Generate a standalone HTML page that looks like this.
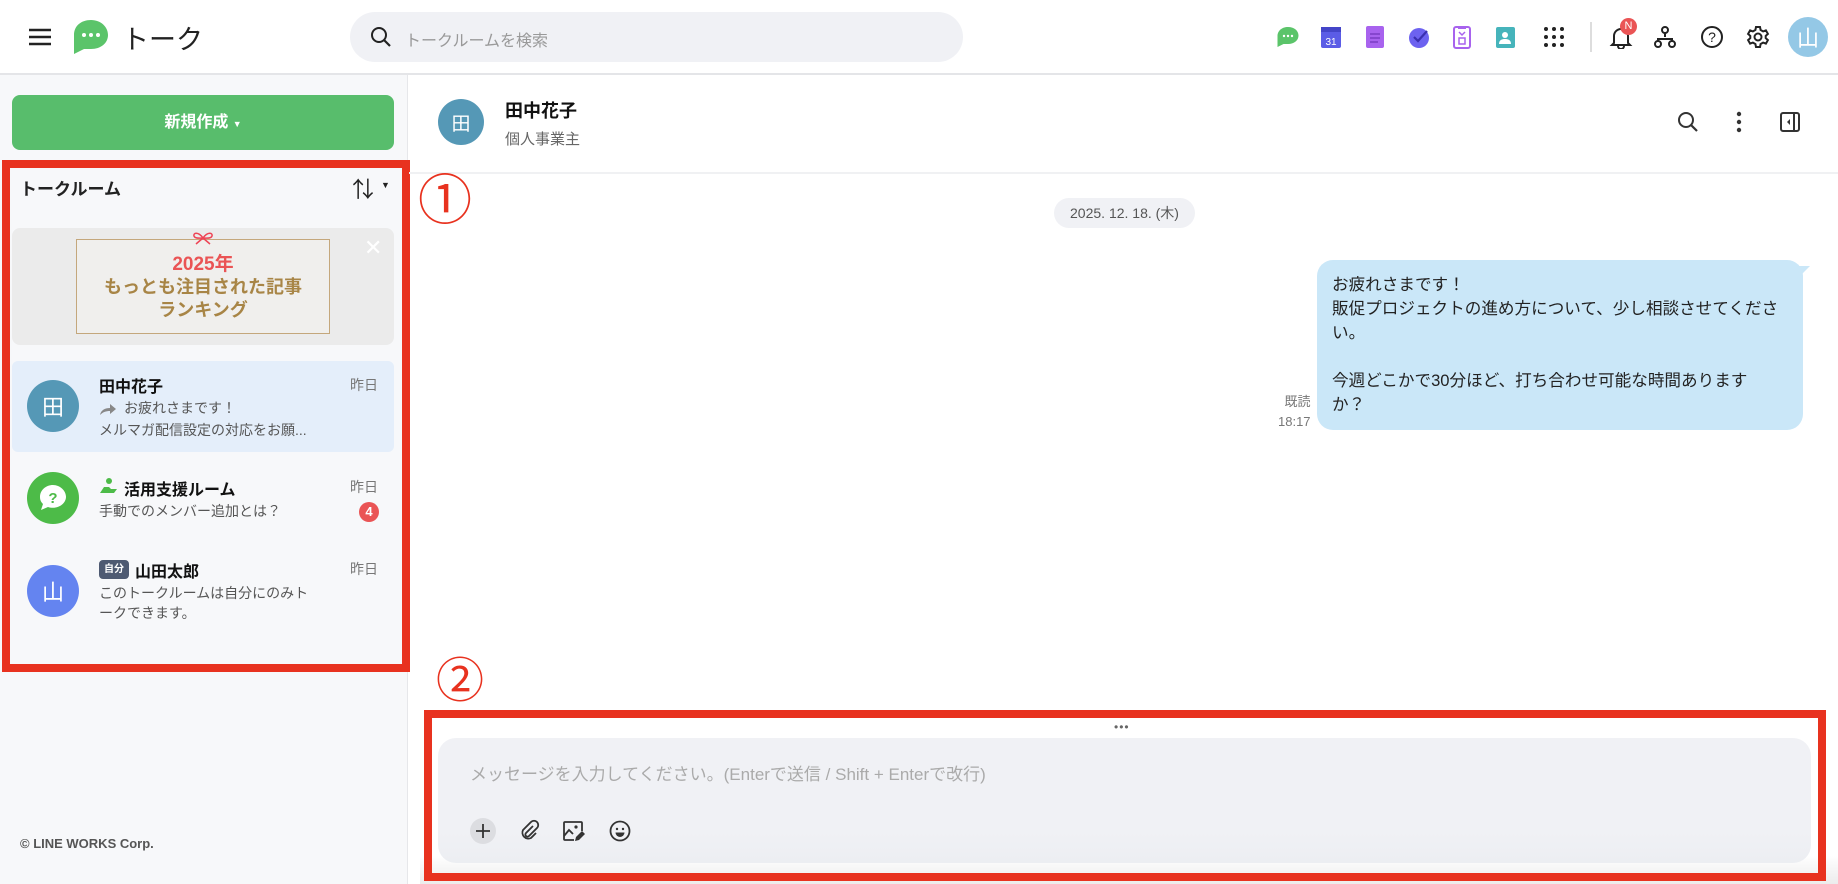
<!DOCTYPE html>
<html><head><meta charset="utf-8"><style>
*{box-sizing:border-box;margin:0;padding:0}
body{width:1838px;height:884px;overflow:hidden;background:#fff;font-family:"Liberation Sans","Noto Sans CJK JP",sans-serif;color:#222;position:relative}
.a{position:absolute}
.hdr{left:0;top:0;width:1838px;height:75px;background:#fff;border-bottom:2px solid #e4e5e8}
.side{left:0;top:75px;width:408px;height:809px;background:#f7f8fa;border-right:1px solid #e6e7ea}
.ic{position:absolute;top:25px;width:24px;height:24px}
.av{position:absolute;border-radius:50%;color:#fff;display:flex;align-items:center;justify-content:center}
.nm{font-size:16px;font-weight:bold;color:#111}
.sub{font-size:14px;color:#555;line-height:20px}
.tm{font-size:14px;color:#777}
</style></head><body>
<div class="a hdr"></div>
<svg class="a" style="left:28px;top:26px" width="24" height="22"><g stroke="#222" stroke-width="2.4"><line x1="1" y1="4" x2="23" y2="4"/><line x1="1" y1="11" x2="23" y2="11"/><line x1="1" y1="18" x2="23" y2="18"/></g></svg>
<svg class="a" style="left:72px;top:18px" width="38" height="38" viewBox="0 0 38 38"><path d="M19 2C9 2 2 8 2 17v19l10-5h7c10 0 17-6 17-14S29 2 19 2z" fill="#5bc46a"/><circle cx="12" cy="17" r="2" fill="#fff"/><circle cx="19" cy="17" r="2" fill="#fff"/><circle cx="26" cy="17" r="2" fill="#fff"/></svg>
<div class="a" style="left:122px;top:18px;font-size:27px;color:#222">トーク</div>
<div class="a" style="left:350px;top:12px;width:613px;height:50px;border-radius:25px;background:#f0f1f5"></div>
<svg class="a" style="left:370px;top:26px" width="22" height="22"><circle cx="9" cy="9" r="7" fill="none" stroke="#222" stroke-width="2"/><line x1="14" y1="14" x2="20" y2="20" stroke="#222" stroke-width="2.2"/></svg>
<div class="a" style="left:405px;top:27px;font-size:16px;color:#999">トークルームを検索</div>
<svg class="ic" style="left:1276px" viewBox="0 0 24 24"><path d="M12 2C6 2 1.5 5.8 1.5 11v11l6-3h4.5c6 0 10.5-3.5 10.5-8.5S18 2 12 2z" fill="#5bc46a"/><circle cx="8" cy="11" r="1.2" fill="#fff"/><circle cx="12" cy="11" r="1.2" fill="#fff"/><circle cx="16" cy="11" r="1.2" fill="#fff"/></svg>
<svg class="ic" style="left:1319px" viewBox="0 0 24 24"><rect x="2" y="2" width="20" height="21" rx="2" fill="#5b5ce6"/><rect x="2" y="2" width="20" height="5" fill="#4445c8"/><text x="12" y="20" font-size="10" fill="#fff" text-anchor="middle" font-family="Liberation Sans">31</text></svg>
<svg class="ic" style="left:1363px" viewBox="0 0 24 24"><rect x="3" y="1" width="18" height="22" rx="2" fill="#a863ee"/><g stroke="#7a3cc4" stroke-width="1.5"><line x1="7" y1="9" x2="17" y2="9"/><line x1="7" y1="13" x2="17" y2="13"/><line x1="7" y1="17" x2="15" y2="17"/></g></svg>
<svg class="ic" style="left:1407px" viewBox="0 0 24 24"><circle cx="12" cy="13" r="10" fill="#6d62f0"/><path d="M7 12l4 4 9-10" fill="none" stroke="#3a2fb0" stroke-width="2.2"/></svg>
<svg class="ic" style="left:1450px" viewBox="0 0 24 24"><rect x="4" y="2" width="16" height="21" rx="2" fill="none" stroke="#a863ee" stroke-width="2"/><rect x="8" y="1" width="8" height="3" fill="#a863ee"/><rect x="9" y="13" width="6" height="6" fill="none" stroke="#a863ee" stroke-width="1.5"/><path d="M9 7l3 3 3-3" fill="none" stroke="#a863ee" stroke-width="1.5"/></svg>
<svg class="ic" style="left:1493px" viewBox="0 0 24 24"><rect x="3" y="2" width="19" height="21" rx="2" fill="#46b4bb"/><circle cx="12" cy="10" r="3" fill="#fff"/><path d="M6 19c0-4 3-5 6-5s6 1 6 5z" fill="#fff"/></svg>
<svg class="ic" style="left:1542px" viewBox="0 0 24 24"><g fill="#222"><circle cx="4" cy="4" r="2"/><circle cx="12" cy="4" r="2"/><circle cx="20" cy="4" r="2"/><circle cx="4" cy="12" r="2"/><circle cx="12" cy="12" r="2"/><circle cx="20" cy="12" r="2"/><circle cx="4" cy="20" r="2"/><circle cx="12" cy="20" r="2"/><circle cx="20" cy="20" r="2"/></g></svg>
<div class="a" style="left:1590px;top:22px;width:2px;height:30px;background:#ddd"></div>
<svg class="ic" style="left:1609px" viewBox="0 0 24 24"><path d="M5 18V11a7 7 0 0 1 14 0v7l2 2H3z" fill="none" stroke="#222" stroke-width="2"/><path d="M9 21a3 3 0 0 0 6 0" fill="none" stroke="#222" stroke-width="2"/></svg>
<div class="a" style="left:1620px;top:18px;width:17px;height:17px;border-radius:50%;background:#ea5455;color:#fff;font-size:11px;text-align:center;line-height:17px">N</div>
<svg class="ic" style="left:1653px" viewBox="0 0 24 24"><g fill="none" stroke="#222" stroke-width="2"><circle cx="12" cy="5" r="3"/><circle cx="5" cy="19" r="3"/><circle cx="19" cy="19" r="3"/><path d="M12 8v4M5 16v-2h14v2"/></g></svg>
<svg class="ic" style="left:1700px" viewBox="0 0 24 24"><circle cx="12" cy="12" r="10" fill="none" stroke="#222" stroke-width="2"/><text x="12" y="17" font-size="14" text-anchor="middle" fill="#222" font-family="Liberation Sans">?</text></svg>
<svg class="ic" style="left:1746px" viewBox="0 0 24 24"><g fill="none" stroke="#222" stroke-width="2"><circle cx="12" cy="12" r="3.5"/><path d="M10 2h4l.6 3 2.5 1.4 2.8-1 2 3.5-2.2 2v2.2l2.2 2-2 3.5-2.8-1-2.5 1.4L14 22h-4l-.6-3-2.5-1.4-2.8 1-2-3.5 2.2-2v-2.2l-2.2-2 2-3.5 2.8 1L9.4 5z"/></g></svg>
<div class="av" style="left:1788px;top:17px;width:40px;height:40px;background:#94c8e6;font-size:22px">山</div>

<div class="a side"></div>
<div class="a" style="left:12px;top:95px;width:382px;height:55px;border-radius:8px;background:#58bd6c;color:#fff;font-size:16px;font-weight:bold;text-align:center;line-height:55px">新規作成 <span style="font-size:9px">▼</span></div>
<div class="a" style="left:2px;top:160px;width:408px;height:512px;border:8px solid #e8321f"></div>
<div class="a" style="left:20px;top:175px;font-size:17px;font-weight:bold;color:#222">トークルーム</div>
<div class="a" style="left:352px;top:172px;font-size:22px;color:#222">⇅</div><div class="a" style="left:381px;top:180px;font-size:9px">▼</div>
<div class="a" style="left:12px;top:228px;width:382px;height:117px;border-radius:8px;background:#ebebeb"></div>
<div class="a" style="left:76px;top:239px;width:254px;height:95px;border:1.5px solid #c4a77c;background:#f0efed;text-align:center;font-weight:bold;line-height:23px;padding-top:13px">
<div style="color:#ea5455;font-size:19px">2025年</div><div style="color:#a88546;font-size:18px">もっとも注目された記事</div><div style="color:#a88546;font-size:18px">ランキング</div></div>
<svg class="a" style="left:190px;top:231px" width="26" height="14"><path d="M13 7C8 0 3 2 4 5s6 2 9 2M13 7c5-7 10-5 9-2s-6 2-9 2M13 7l-7 6M13 7l7 6" fill="none" stroke="#e45" stroke-width="1.5"/></svg>
<div class="a" style="left:364px;top:235px;color:#fff;font-size:22px">✕</div>

<div class="a" style="left:12px;top:361px;width:382px;height:91px;border-radius:6px;background:#e4eefa"></div>
<div class="av" style="left:27px;top:380px;width:52px;height:52px;background:#5598b6;font-size:22px">田</div>
<div class="a nm" style="left:99px;top:373px">田中花子</div>
<div class="a tm" style="left:350px;top:375px">昨日</div>
<svg class="a" style="left:99px;top:402px" width="18" height="14"><path d="M1 13c1-5 5-7 10-7V2l6 5-6 5V9c-4 0-7 1-10 4z" fill="#888"/></svg>
<div class="a sub" style="left:124px;top:398px">お疲れさまです！</div>
<div class="a sub" style="left:99px;top:420px">メルマガ配信設定の対応をお願...</div>

<div class="av" style="left:27px;top:472px;width:52px;height:52px;background:#4dbb48;font-size:0"><svg width="30" height="30" viewBox="0 0 30 30"><path d="M15 2C8 2 2 7 2 14c0 3 1 5 3 7l-2 6 7-3c1.5.5 3 .8 5 .8 7 0 13-5 13-11S22 2 15 2z" fill="#fff"/><text x="15" y="20" text-anchor="middle" font-size="15" font-weight="bold" fill="#4dbb48" font-family="Liberation Sans">?</text></svg></div>
<svg class="a" style="left:99px;top:477px" width="20" height="18"><circle cx="10" cy="4" r="3" fill="#4dbb48"/><path d="M1 16l4-6h5l2 2h6l-3 4z" fill="#4dbb48"/></svg>
<div class="a nm" style="left:124px;top:476px">活用支援ルーム</div>
<div class="a tm" style="left:350px;top:477px">昨日</div>
<div class="a sub" style="left:99px;top:501px">手動でのメンバー追加とは？</div>
<div class="a" style="left:359px;top:502px;width:20px;height:20px;border-radius:50%;background:#ea5455;color:#fff;font-size:13px;font-weight:bold;text-align:center;line-height:20px">4</div>

<div class="av" style="left:27px;top:565px;width:52px;height:52px;background:#6484f0;font-size:22px">山</div>
<div class="a" style="left:99px;top:560px;width:30px;height:19px;border-radius:4px;background:#4e5a72;color:#fff;font-size:10px;font-weight:bold;text-align:center;line-height:19px">自分</div>
<div class="a nm" style="left:135px;top:558px">山田太郎</div>
<div class="a tm" style="left:350px;top:559px">昨日</div>
<div class="a sub" style="left:99px;top:583px">このトークルームは自分にのみト<br>ークできます。</div>
<div class="a" style="left:20px;top:836px;font-size:13px;font-weight:bold;color:#555">© LINE WORKS Corp.</div>

<div class="a" style="left:409px;top:172px;width:1429px;height:2px;background:#f0f1f3"></div>
<div class="av" style="left:438px;top:99px;width:46px;height:46px;background:#5598b6;font-size:19px">田</div>
<div class="a" style="left:505px;top:97px;font-size:18px;font-weight:bold;color:#111">田中花子</div>
<div class="a" style="left:505px;top:128px;font-size:15px;color:#666">個人事業主</div>
<svg class="a" style="left:1676px;top:110px" width="24" height="24"><circle cx="10" cy="10" r="7" fill="none" stroke="#333" stroke-width="2"/><line x1="15" y1="15" x2="21" y2="21" stroke="#333" stroke-width="2.2"/></svg>
<svg class="a" style="left:1734px;top:110px" width="10" height="24"><circle cx="5" cy="4" r="2.2" fill="#333"/><circle cx="5" cy="12" r="2.2" fill="#333"/><circle cx="5" cy="20" r="2.2" fill="#333"/></svg>
<svg class="a" style="left:1779px;top:111px" width="22" height="22"><rect x="2" y="2" width="18" height="18" rx="2" fill="none" stroke="#333" stroke-width="2"/><line x1="15" y1="2" x2="15" y2="20" stroke="#333" stroke-width="2"/><path d="M11 8v6l-3-3z" fill="#333"/></svg>

<div class="a" style="left:418px;top:166px;font-size:54px;color:#e8321f;line-height:70px">①</div>
<div class="a" style="left:1054px;top:198px;width:141px;height:30px;border-radius:15px;background:#f0f1f5;font-size:14px;color:#555;text-align:center;line-height:30px">2025. 12. 18. (木)</div>

<div class="a" style="left:1317px;top:260px;width:486px;height:170px;border-radius:16px;background:#cae7f8"></div>
<svg class="a" style="left:1786px;top:266px" width="24" height="16"><path d="M0 0h24L8 16z" fill="#cae7f8"/></svg>
<div class="a" style="left:1332px;top:273px;font-size:16.6px;line-height:24px;color:#222;white-space:nowrap">お疲れさまです！<br>販促プロジェクトの進め方について、少し相談させてくださ<br>い。<br><br>今週どこかで30分ほど、打ち合わせ可能な時間あります<br>か？</div>
<div class="a" style="left:1278px;top:392px;font-size:13px;color:#777;text-align:right;line-height:20px">既読<br>18:17</div>

<div class="a" style="left:436px;top:652px;font-size:48px;color:#e8321f;line-height:60px">②</div>
<div class="a" style="left:420px;top:856px;width:1418px;height:28px;background:linear-gradient(#fff,#ececec)"></div>
<div class="a" style="left:424px;top:710px;width:1402px;height:171px;border:8px solid #e8321f"></div>
<div class="a" style="left:1114px;top:720px;font-size:12px;color:#666;letter-spacing:1px">•••</div>
<div class="a" style="left:438px;top:738px;width:1373px;height:125px;border-radius:18px;background:linear-gradient(#f0f1f5 75%,#eceef2)"></div>
<div class="a" style="left:470px;top:760px;font-size:17px;color:#aaa">メッセージを入力してください。(Enterで送信 / Shift + Enterで改行)</div>
<div class="a" style="left:470px;top:818px;width:26px;height:26px;border-radius:50%;background:#dcdde1"></div>
<svg class="a" style="left:475px;top:823px" width="16" height="16"><path d="M8 1v14M1 8h14" stroke="#333" stroke-width="1.8"/></svg>
<svg class="a" style="left:517px;top:819px" width="24" height="24" viewBox="0 0 24 24"><path d="M16 7l-7 7a2 2 0 0 0 3 3l8-8a4 4 0 0 0-6-6L6 11a6 6 0 0 0 8 8l5-5" fill="none" stroke="#333" stroke-width="1.8"/></svg>
<svg class="a" style="left:561px;top:819px" width="24" height="24" viewBox="0 0 24 24"><path d="M13 21H4a1 1 0 0 1-1-1V4a1 1 0 0 1 1-1h16a1 1 0 0 1 1 1v8" fill="none" stroke="#333" stroke-width="1.8"/><path d="M3 17l5-6 4 4" fill="none" stroke="#333" stroke-width="1.8"/><circle cx="15" cy="8" r="1.6" fill="#333"/><path d="M14 22l1-4 6-6 3 3-6 6z" fill="#333"/></svg>
<svg class="a" style="left:608px;top:819px" width="24" height="24" viewBox="0 0 24 24"><circle cx="12" cy="12" r="9.5" fill="none" stroke="#333" stroke-width="1.8"/><circle cx="9" cy="10" r="1.2" fill="#333"/><circle cx="15" cy="10" r="1.2" fill="#333"/><path d="M7.5 13.5h9a4.5 4.5 0 0 1-9 0z" fill="#333"/></svg>
</body></html>
